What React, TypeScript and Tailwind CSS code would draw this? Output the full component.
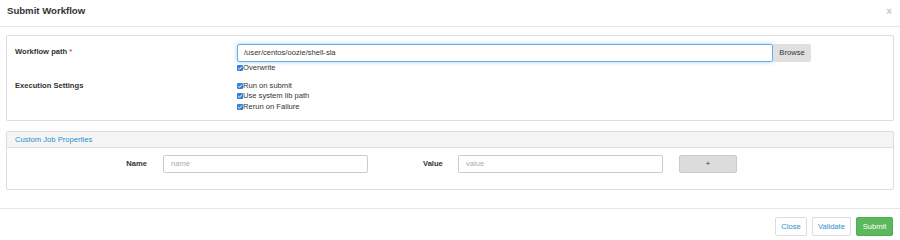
import React from 'react';

const Check: React.FC<{ label: string }> = ({ label }) => (
  <label className="flex items-center h-[10.5px] leading-none">
    <span className="w-[6px] h-[6px] rounded-[1px] bg-[#2f80e0] flex items-center justify-center shrink-0">
      <svg viewBox="0 0 6 6" className="w-[6px] h-[6px]">
        <path d="M1.2 3.1 L2.5 4.4 L4.9 1.6" fill="none" stroke="white" strokeWidth="1" />
      </svg>
    </span>
    <span>{label}</span>
  </label>
);

const App: React.FC = () => {
  return (
    <div className="w-[900px] h-[240px] bg-white font-['Liberation_Sans',Arial,sans-serif] text-[7.6px] text-[#333] flex flex-col">
      {/* Header */}
      <div className="h-[27px] border-b border-[#e8e8e8] flex items-center justify-between pl-[7px] pr-[8px] shrink-0">
        <span className="text-[9.6px] font-bold text-[#333] -mt-[3px]">Submit Workflow</span>
        <span className="text-[10px] text-[#c8c8c8] font-bold -mt-[4px]">×</span>
      </div>

      <div className="px-[6px] pt-[8px] flex flex-col">
        {/* Panel 1 */}
        <div className="h-[86px] border border-[#dddddd] rounded-[2px] flex flex-col pt-[8px]">
          <div className="flex">
            <div className="w-[230px] pl-[8px] pt-[2px] font-bold">
              Workflow path <span className="text-[#d9534f]">*</span>
            </div>
            <div className="flex flex-col">
              <div className="flex">
                <div className="w-[536px] h-[18px] border border-[#66afe9] rounded-[2px] shadow-[0_0_4px_rgba(102,175,233,0.6)] flex items-center px-[6px]">
                  /user/centos/oozie/shell-sla
                </div>
                <button className="w-[38px] h-[18px] bg-[#e0e0e0] rounded-r-[2px] text-[#333] text-[7.6px] flex items-center justify-center">
                  Browse
                </button>
              </div>
              <div className="pt-[1px]">
                <Check label="Overwrite" />
              </div>
            </div>
          </div>
          <div className="flex mt-[7px]">
            <div className="w-[230px] pl-[8px] font-bold leading-[10.5px]">Execution Settings</div>
            <div className="flex flex-col">
              <Check label="Run on submit" />
              <Check label="Use system lib path" />
              <Check label="Rerun on Failure" />
            </div>
          </div>
        </div>

        {/* Panel 2 */}
        <div className="mt-[10px] h-[59px] border border-[#dddddd] rounded-[2px] flex flex-col">
          <div className="h-[16px] bg-[#f5f5f5] border-b border-[#dddddd] flex items-center pl-[8px] text-[#2a8fd0]">
            Custom Job Properties
          </div>
          <div className="flex items-center mt-[7px]">
            <div className="w-[140px] text-right font-bold">Name</div>
            <div className="ml-[16px] w-[205px] h-[18px] border border-[#cccccc] rounded-[2px] flex items-center px-[7px] text-[#aaaaaa]">
              name
            </div>
            <div className="ml-[55px] w-[19px] font-bold">Value</div>
            <div className="ml-[16px] w-[205px] h-[18px] border border-[#cccccc] rounded-[2px] flex items-center px-[7px] text-[#aaaaaa]">
              value
            </div>
            <button className="ml-[16px] w-[58px] h-[18px] bg-[#dcdcdc] border border-[#cccccc] rounded-[2px] text-[#333] text-[7.6px] flex items-center justify-center">
              +
            </button>
          </div>
        </div>
      </div>

      {/* Footer */}
      <div className="mt-[18px] border-t border-[#e8e8e8] flex justify-end gap-[5px] pr-[7px] pt-[8px]">
        <button className="w-[32px] h-[19px] border border-[#dddddd] rounded-[2px] bg-white text-[#2a8fd0] text-[7.6px] flex items-center justify-center">
          Close
        </button>
        <button className="w-[39px] h-[19px] border border-[#dddddd] rounded-[2px] bg-white text-[#2a8fd0] text-[7.6px] flex items-center justify-center">
          Validate
        </button>
        <button className="w-[37px] h-[19px] border border-[#4cae4c] rounded-[2px] bg-[#5cb85c] text-white text-[7.6px] flex items-center justify-center">
          Submit
        </button>
      </div>
    </div>
  );
};

export default App;
